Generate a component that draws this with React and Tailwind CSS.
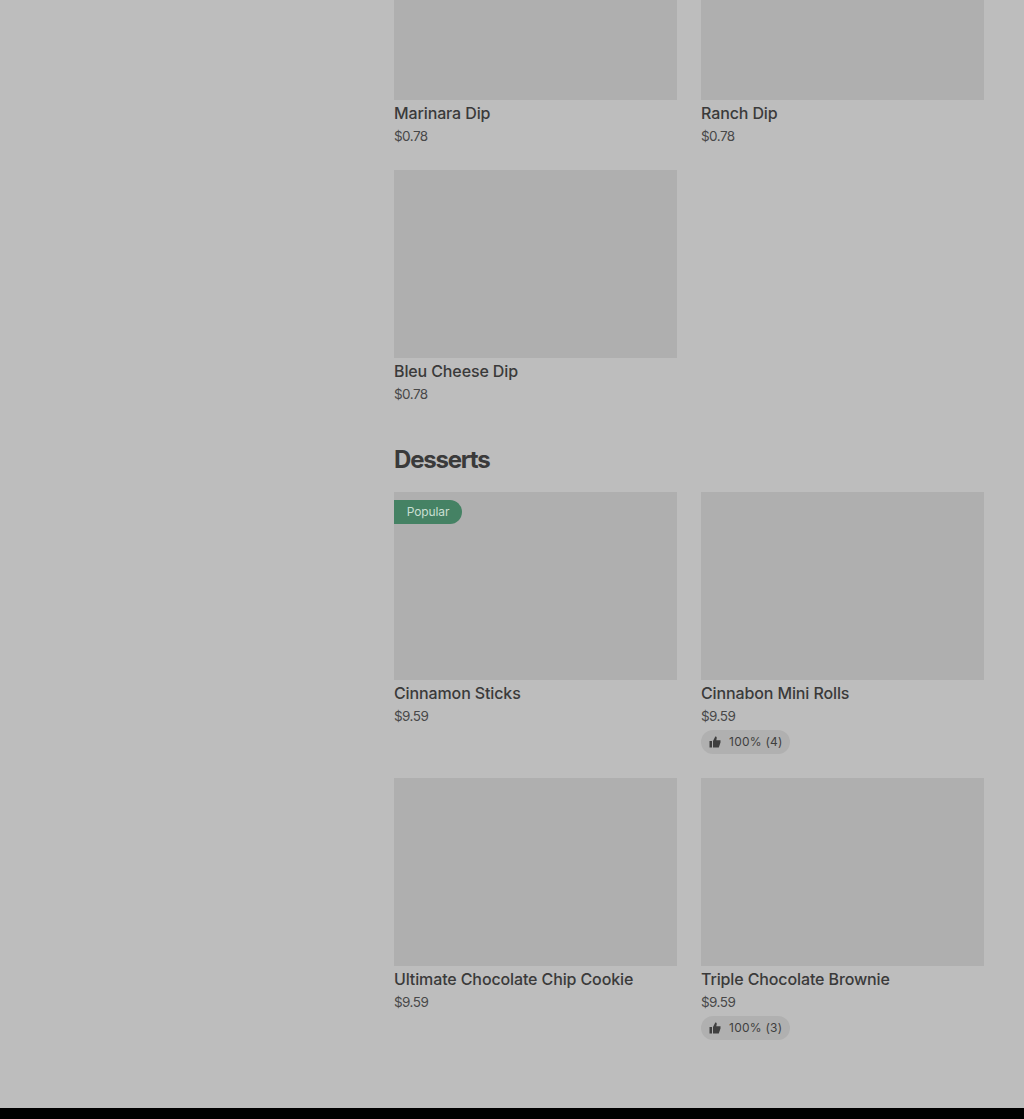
import React from "react";

const font = { fontFamily: '"Inter", "Liberation Sans", sans-serif' };

function ThumbIcon() {
  return (
    <svg width="12" height="12" viewBox="0 0 12 12" fill="currentColor" aria-hidden="true">
      <rect x="0.5" y="5" width="2.5" height="6.5" />
      <path d="M4 5 L6.3 0.6 C7.4 0.6 7.9 1.3 7.7 2.3 L7.3 4.2 L11.5 4.2 L11.5 6.4 L9.8 11.5 L4 11.5 Z" />
    </svg>
  );
}

function Card({ name, price, rating, popular, imageHeight = "h-[188px]" }) {
  return (
    <div className="flex flex-col pb-6">
      <div className={`relative w-full bg-[#afafaf] ${imageHeight}`}>
        {popular && (
          <span className="absolute top-2 left-0 flex h-6 w-[68px] items-center justify-center rounded-r-full bg-[#458264] text-xs tracking-[-0.1px] text-[#c9dfd2]">
            Popular
          </span>
        )}
      </div>
      <div className="mt-px h-6 text-base leading-6 font-medium tracking-[-0.12px] text-[#3a3a3a]">{name}</div>
      <div className="mt-px h-5 text-[13.5px] leading-5 tracking-[-0.55px] text-[#484848]">{price}</div>
      {rating && (
        <div className="mt-1 flex h-6 w-[89px] items-center gap-2 rounded-full bg-[#b0b0b0] pl-2 text-xs tracking-[0.25px] text-[#3f3f3f]">
          <ThumbIcon />
          <span className="whitespace-nowrap">{rating}</span>
        </div>
      )}
    </div>
  );
}

export default function App() {
  return (
    <div style={font} className="flex h-[1119px] flex-col overflow-hidden bg-[#bdbdbd]">
      <main className="ml-[394px] w-[590px]">
        <section className="grid grid-cols-2 gap-x-6">
          <Card name="Marinara Dip" price="$0.78" imageHeight="h-[100px]" />
          <Card name="Ranch Dip" price="$0.78" imageHeight="h-[100px]" />
          <Card name="Bleu Cheese Dip" price="$0.78" />
        </section>
        <h2 className="mt-4 mb-4 h-8 text-2xl leading-8 font-bold tracking-[-1.2px] text-[#3a3a3a]">Desserts</h2>
        <section className="grid grid-cols-2 gap-x-6">
          <Card name="Cinnamon Sticks" price="$9.59" popular />
          <Card name="Cinnabon Mini Rolls" price="$9.59" rating="100% (4)" />
          <Card name="Ultimate Chocolate Chip Cookie" price="$9.59" />
          <Card name="Triple Chocolate Brownie" price="$9.59" rating="100% (3)" />
        </section>
      </main>
      <footer className="mt-auto h-[11px] bg-black" />
    </div>
  );
}
